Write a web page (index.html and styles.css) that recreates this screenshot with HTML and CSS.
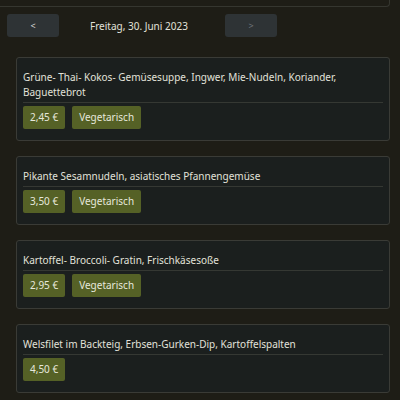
FILE: index.html
```html
<!DOCTYPE html>
<html lang="de">
<head>
  <meta charset="UTF-8">
  <meta name="viewport" content="width=device-width, initial-scale=1.0">
  <title>Speiseplan</title>
  <link rel="stylesheet" href="styles.css">
</head>
<body>
  <div class="top-edge"></div>

  <div class="day-nav">
    <button class="nav-btn">&lt;</button>
    <div class="day-label">Freitag, 30. Juni 2023</div>
    <button class="nav-btn disabled">&gt;</button>
  </div>

  <div class="meal-list">
    <div class="meal-card">
      <div class="meal-name">Grüne- Thai- Kokos- Gemüsesuppe, Ingwer, Mie-Nudeln, Koriander, Baguettebrot</div>
      <div class="meal-tags">
        <span class="tag">2,45 €</span>
        <span class="tag">Vegetarisch</span>
      </div>
    </div>

    <div class="meal-card">
      <div class="meal-name">Pikante Sesamnudeln, asiatisches Pfannengemüse</div>
      <div class="meal-tags">
        <span class="tag">3,50 €</span>
        <span class="tag">Vegetarisch</span>
      </div>
    </div>

    <div class="meal-card">
      <div class="meal-name">Kartoffel- Broccoli- Gratin, Frischkäsesoße</div>
      <div class="meal-tags">
        <span class="tag">2,95 €</span>
        <span class="tag">Vegetarisch</span>
      </div>
    </div>

    <div class="meal-card">
      <div class="meal-name">Welsfilet im Backteig, Erbsen-Gurken-Dip, Kartoffelspalten</div>
      <div class="meal-tags">
        <span class="tag">4,50 €</span>
      </div>
    </div>
  </div>
</body>
</html>
```

FILE: styles.css
```css
body {
  margin: 0;
  font-family: "Noto Sans", "Open Sans", sans-serif;
  font-size: 10px;
  background-color: #1e1d16;
  color: #e2e2da;
  height: 400px;
  overflow: hidden;
}

.top-edge {
  width: 389px;
  height: 6px;
  border-bottom: 1px solid #35362f;
  border-right: 1px solid #35362f;
  border-bottom-right-radius: 4px;
}

.day-nav {
  display: flex;
  align-items: center;
  margin-top: 7px;
  padding-left: 7px;
}

.nav-btn {
  width: 52px;
  height: 23px;
  border: none;
  border-radius: 3px;
  background-color: #2e3335;
  color: #d8d8d8;
  font-family: inherit;
  font-size: 9px;
  padding: 0;
}

.nav-btn.disabled {
  color: #70757a;
}

.day-label {
  width: 166px;
  padding-left: 31px;
  box-sizing: border-box;
  font-size: 10px;
}

.meal-list {
  display: flex;
  flex-direction: column;
  gap: 15px;
  margin-top: 20px;
  padding: 0 10px 0 16px;
}

.meal-card {
  background-color: #1b1f1e;
  border: 1px solid #3a3b36;
  border-radius: 3px;
  padding: 12px 6px 11px 6px;
}

.meal-name {
  line-height: 15px;
  padding-bottom: 2px;
  border-bottom: 1px solid #353833;
}

.meal-tags {
  display: flex;
  gap: 7px;
  margin-top: 3px;
}

.tag {
  height: 23px;
  line-height: 23px;
  padding: 0 7px;
  background-color: #556126;
  border-radius: 2px;
  color: #e6e8dc;
}
```
